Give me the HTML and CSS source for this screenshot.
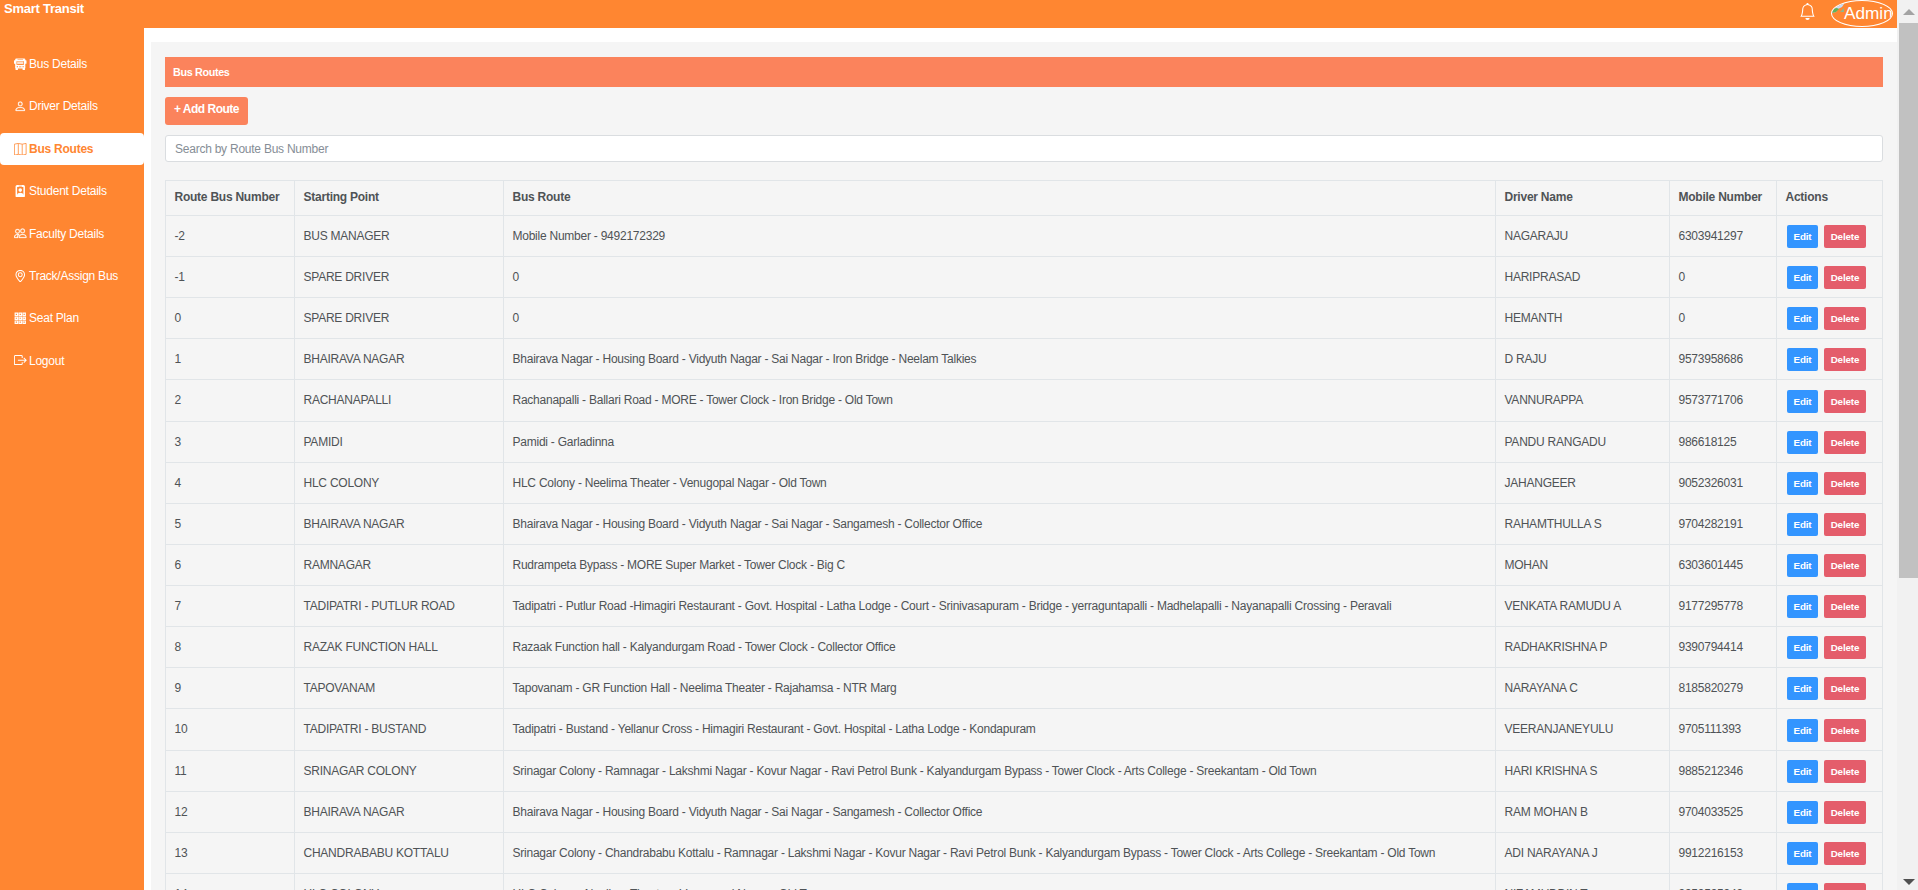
FILE: index.html
```html
<!DOCTYPE html>
<html lang="en">
<head>
<meta charset="utf-8">
<title>Smart Transit</title>
<link rel="stylesheet" href="styles.css">
</head>
<body>
<div class="window">
  <div class="app">
    <header class="topbar">
      <span class="brand">Smart Transit</span>
      <div class="account">
        <svg class="bell" viewBox="0 0 16 16" fill="currentColor"><path d="M8 16a2 2 0 0 0 2-2H6a2 2 0 0 0 2 2M8 1.918l-.797.161A4 4 0 0 0 4 6c0 .628-.134 2.197-.459 3.742-.16.767-.376 1.566-.663 2.258h10.244c-.287-.692-.502-1.490-.663-2.258C12.134 8.197 12 6.628 12 6a4 4 0 0 0-3.203-3.920zM14.220 12c.223.447.481.801.780 1H1c.299-.199.557-.553.780-1C2.680 10.200 3 6.880 3 6c0-2.420 1.720-4.440 4.005-4.901a1 1 0 1 1 1.990 0A5 5 0 0 1 13 6c0 .880.320 4.200 1.220 6"/></svg>
        <span class="avatar">
          <svg class="broken" viewBox="0 0 12 10"><path d="M0 9V4Q2 0 7 0L12 0 10 3 6 5 4 8Z" fill="#c6dcf8"/><path d="M0 9Q1 4 5 4L7 5 4 8Z" fill="#5fb25c"/><path d="M8 8l4-4v4z" fill="#8fb58b"/><path d="M2 3Q4 1 6 2L5 3Z" fill="#fff"/></svg>
          <span class="avatar-name">Admin</span>
        </span>
      </div>
    </header>
    <div class="body">
      <nav class="sidebar">
        <a class="item"><svg viewBox="0 0 16 16" fill="currentColor"><path fill-rule="evenodd" d="M3 0.500h10a1.500 1.500 0 0 1 1.500 1.500v1h1a.5.5 0 0 1 .5.5V7a.5.5 0 0 1-.5.5h-1V13H14v2.500h-3V13.500H5v2H2V13h-.5V7.500h-1A.5.5 0 0 1 0 7V3.500A.5.5 0 0 1 .5 3h1V2A1.500 1.500 0 0 1 3 .5M4.500 1.800v.8h7v-.8zM3.200 4v4.500c3 .5 6.600.5 9.600 0V4zM3.500 10.500v1.200h1.600v-1.200zm7.400 0v1.200h1.600v-1.200zM6.500 11v.8h3V11z"/><path d="M4 4.600h8v3.200H4z" opacity=".75"/></svg><span>Bus Details</span></a>
        <a class="item"><svg viewBox="0 0 16 16" fill="currentColor" stroke="currentColor" stroke-width=".3"><path d="M8 8a3 3 0 1 0 0-6 3 3 0 0 0 0 6m2-3a2 2 0 1 1-4 0 2 2 0 0 1 4 0m4 8c0 1-1 1-1 1H3s-1 0-1-1 1-4 6-4 6 3 6 4m-1-.004c-.001-.246-.154-.986-.832-1.664C11.516 10.680 10.289 10 8 10s-3.516.680-4.168 1.332c-.678.678-.830 1.418-.832 1.664z"/></svg><span>Driver Details</span></a>
        <a class="item active"><svg viewBox="0 0 16 16" fill="none" stroke="currentColor"><path d="M.5 1.500 5.500.5l5 1 5-1v14l-5 1-5-1-5 1zM5.500.5v14M10.500 1.500v14"/></svg><span>Bus Routes</span></a>
        <a class="item"><svg viewBox="0 0 16 16" fill="currentColor"><path fill-rule="evenodd" d="M4 0h8a2 2 0 0 1 2 2v12a2 2 0 0 1-2 2H4a2 2 0 0 1-2-2V2a2 2 0 0 1 2-2m0 2.500V12c1 1 7 1 8 0V2.500zM6 1v.8h4V1z"/><circle cx="8" cy="6.500" r="2.300"/><path d="M4 13c0-4 8-4 8 0z"/></svg><span>Student Details</span></a>
        <a class="item"><svg viewBox="0 0 16 16" fill="currentColor" stroke="currentColor" stroke-width=".3"><path d="M15 14s1 0 1-1-1-4-5-4-5 3-5 4 1 1 1 1zm-7.978-1L7 12.996c.001-.264.167-1.030.760-1.720C8.312 10.629 9.282 10 11 10c1.717 0 2.687.630 3.240 1.276.593.690.758 1.457.760 1.720l-.008.004zM11 7a2 2 0 1 0 0-4 2 2 0 0 0 0 4m3-2a3 3 0 1 1-6 0 3 3 0 0 1 6 0M6.936 9.280a6 6 0 0 0-1.230-.247A7 7 0 0 0 5 9c-4 0-5 3-5 4q0 1 1 1h4.216A2.240 2.240 0 0 1 5 13c0-1.010.377-2.042 1.090-2.904.243-.294.526-.569.846-.816M4.920 10A5.500 5.500 0 0 0 4 13H1c0-.260.164-1.030.760-1.724.545-.636 1.492-1.256 3.160-1.275ZM1.500 5.500a3 3 0 1 1 6 0 3 3 0 0 1-6 0m3-2a2 2 0 1 0 0 4 2 2 0 0 0 0-4"/></svg><span>Faculty Details</span></a>
        <a class="item"><svg viewBox="0 0 16 16" fill="none" stroke="currentColor" stroke-width="1.300"><path d="M8 15.300C5.500 12.500 2.500 9 2.500 6a5.500 5.500 0 0 1 11 0c0 3-3 6.500-5.500 9.300z"/><circle cx="8" cy="6" r="2.500"/></svg><span>Track/Assign Bus</span></a>
        <a class="item"><svg viewBox="0 0 16 16" fill="none" stroke="currentColor" stroke-width="1.500"><path d="M1.500 1.500h3v3h-3zm5 0h3v3h-3zm5 0h3v3h-3zm-10 5h3v3h-3zm5 0h3v3h-3zm5 0h3v3h-3zm-10 5h3v3h-3zm5 0h3v3h-3zm5 0h3v3h-3z"/></svg><span>Seat Plan</span></a>
        <a class="item"><svg viewBox="0 0 16 16" fill="none" stroke="currentColor" stroke-width="1.300"><path d="M10.500 5V3a1 1 0 0 0-1-1h-8a1 1 0 0 0-1 1v9.500a1 1 0 0 0 1 1h8a1 1 0 0 0 1-1v-2M5 8h10.500M12.500 5l3 3-3 3"/></svg><span>Logout</span></a>
      </nav>
      <main class="content">
        <div class="panel">
          <h1 class="title">Bus Routes</h1>
          <button class="add">+ Add Route</button>
          <input class="search" placeholder="Search by Route Bus Number">
          <table class="routes">
            <colgroup><col class="c1"><col class="c2"><col class="c3"><col class="c4"><col class="c5"><col class="c6"></colgroup>
            <thead><tr><th>Route Bus Number</th><th>Starting Point</th><th>Bus Route</th><th>Driver Name</th><th>Mobile Number</th><th>Actions</th></tr></thead>
            <tbody id="rows"></tbody>
          </table>
        </div>
      </main>
    </div>
  </div>
  <div class="scrollbar"><i class="up"></i><i class="thumb"></i><i class="down"></i></div>
</div>
<script src="rows.js"></script>
</body>
</html>
```
FILE: styles.css
```css
* { box-sizing: border-box; }
body { margin: 0; font-family: "Liberation Sans", Arial, sans-serif; font-size: 12px; letter-spacing: -.24px; color: #4f5356; background: #fff; }
.window { display: flex; width: 100%; height: 890px; overflow: hidden; }
.app { flex: 1; display: flex; flex-direction: column; min-width: 0; }
.topbar { display: flex; justify-content: space-between; height: 28px; flex: none; background: #ff8631; color: #fff; padding: 0 4px; }
.brand { font-weight: 700; font-size: 13px; line-height: 17px; letter-spacing: -.25px; }
.account { display: flex; align-items: flex-start; gap: 15px; }
.bell { width: 17px; height: 17px; margin-top: 3px; }
.avatar { display: flex; width: 62px; height: 27px; border: 1px solid #fff; border-radius: 50%; overflow: hidden; }
.broken { width: 12px; height: 10px; margin-top: 3px; flex: none; }
.avatar-name { font-size: 17.200px; line-height: 25px; letter-spacing: 0; }
.body { display: flex; flex: 1; min-height: 0; }
.sidebar { width: 144px; flex: none; background: #ff8631; padding-top: 20px; display: flex; flex-direction: column; gap: 10.4px; }
.item { display: flex; align-items: center; gap: 2.5px; height: 32px; padding-left: 14px; color: #fff; border-radius: 4px; flex: none; white-space: nowrap; }
.item svg { width: 12.500px; height: 12.500px; }
.active { background: #fff; color: #ff8631; font-weight: 700; }
.content { flex: 1; min-width: 0; padding: 14px 0 0 7px; }
.panel { background: #f5f5f5; height: 900px; padding: 15px 14px 0 14px; }
.title { margin: 0 0 10px; height: 30px; padding-left: 8px; line-height: 31px; font-size: 10.800px; letter-spacing: -.35px; font-weight: 700; color: #fff; background: #fb835c; }
.add { display: block; width: 83px; height: 28px; border: 0; border-radius: 3px; padding: 0 0 5px; background: #fb835c; color: #fff; font: 700 12px "Liberation Sans", Arial, sans-serif; letter-spacing: -.5px; white-space: nowrap; }
.search { display: block; width: 100%; height: 27px; margin: 10px 0 18px; border: 1px solid #dadde0; border-radius: 3px; padding: 0 9px; background: #fff; font: 12px "Liberation Sans", Arial, sans-serif; letter-spacing: -.24px; }
.search::placeholder { color: #868e96; opacity: 1; }
.routes { width: 100%; table-layout: fixed; border-collapse: collapse; }
.c1 { width: 129px; } .c2 { width: 209px; } .c3 { width: 992px; } .c4 { width: 174px; } .c5 { width: 107px; }
.routes th, .routes td { border: 1px solid #e1e5e8; padding: 0 8.5px; text-align: left; white-space: nowrap; }
.routes th { height: 35px; font-weight: 700; padding-bottom: 2px; }
.routes td { height: 41px; padding-bottom: 1px; }
.routes tbody tr:nth-child(8n+5) td { height: 42px; }
.actions { display: flex; gap: 6px; padding-top: 2px; margin-left: 1.5px; }
.btn { height: 23px; border: 0; border-radius: 2px; padding: 0; color: #fff; font: 700 9.800px "Liberation Sans", Arial, sans-serif; letter-spacing: -.12px; }
.edit { width: 31px; background: #3395ff; }
.delete { width: 42px; background: #e45d6b; }
.scrollbar { width: 21px; flex: none; background: #f1f1f1; display: flex; flex-direction: column; align-items: center; }
.up { border: 6px solid transparent; border-top: 0; border-bottom: 6px solid #a3a3a3; margin: 9px 0 8px 2px; }
.thumb { width: 19px; height: 555px; margin-left: 2px; background: #c1c1c1; }
.down { border: 6px solid transparent; border-bottom: 0; border-top: 6px solid #505050; margin: auto 0 5px 2px; }
```
FILE: rows.js
```js
const routes = [
["-2","BUS MANAGER","Mobile Number - 9492172329","NAGARAJU","6303941297"],
["-1","SPARE DRIVER","0","HARIPRASAD","0"],
["0","SPARE DRIVER","0","HEMANTH","0"],
["1","BHAIRAVA NAGAR","Bhairava Nagar - Housing Board - Vidyuth Nagar - Sai Nagar - Iron Bridge - Neelam Talkies","D RAJU","9573958686"],
["2","RACHANAPALLI","Rachanapalli - Ballari Road - MORE - Tower Clock - Iron Bridge - Old Town","VANNURAPPA","9573771706"],
["3","PAMIDI","Pamidi - Garladinna","PANDU RANGADU","986618125"],
["4","HLC COLONY","HLC Colony - Neelima Theater - Venugopal Nagar - Old Town","JAHANGEER","9052326031"],
["5","BHAIRAVA NAGAR","Bhairava Nagar - Housing Board - Vidyuth Nagar - Sai Nagar - Sangamesh - Collector Office","RAHAMTHULLA S","9704282191"],
["6","RAMNAGAR","Rudrampeta Bypass - MORE Super Market - Tower Clock - Big C","MOHAN","6303601445"],
["7","TADIPATRI - PUTLUR ROAD","Tadipatri - Putlur Road -Himagiri Restaurant - Govt. Hospital - Latha Lodge - Court - Srinivasapuram - Bridge - yerraguntapalli - Madhelapalli - Nayanapalli Crossing - Peravali","VENKATA RAMUDU A","9177295778"],
["8","RAZAK FUNCTION HALL","Razaak Function hall - Kalyandurgam Road - Tower Clock - Collector Office","RADHAKRISHNA P","9390794414"],
["9","TAPOVANAM","Tapovanam - GR Function Hall - Neelima Theater - Rajahamsa - NTR Marg","NARAYANA C","8185820279"],
["10","TADIPATRI - BUSTAND","Tadipatri - Bustand - Yellanur Cross - Himagiri Restaurant - Govt. Hospital - Latha Lodge - Kondapuram","VEERANJANEYULU","9705111393"],
["11","SRINAGAR COLONY","Srinagar Colony - Ramnagar - Lakshmi Nagar - Kovur Nagar - Ravi Petrol Bunk - Kalyandurgam Bypass - Tower Clock - Arts College - Sreekantam - Old Town","HARI KRISHNA S","9885212346"],
["12","BHAIRAVA NAGAR","Bhairava Nagar - Housing Board - Vidyuth Nagar - Sai Nagar - Sangamesh - Collector Office","RAM MOHAN B","9704033525"],
["13","CHANDRABABU KOTTALU","Srinagar Colony - Chandrababu Kottalu - Ramnagar - Lakshmi Nagar - Kovur Nagar - Ravi Petrol Bunk - Kalyandurgam Bypass - Tower Clock - Arts College - Sreekantam - Old Town","ADI NARAYANA J","9912216153"],
["14","HLC COLONY","HLC Colony - Neelima Theater - Venugopal Nagar - Old Town","NIZAMUDDIN T","9959595949"]
];
document.getElementById("rows").innerHTML = routes.map(r =>
  "<tr>" + r.map(v => `<td>${v}</td>`).join("") +
  '<td><div class="actions"><button class="btn edit">Edit</button><button class="btn delete">Delete</button></div></td></tr>').join("");
```
